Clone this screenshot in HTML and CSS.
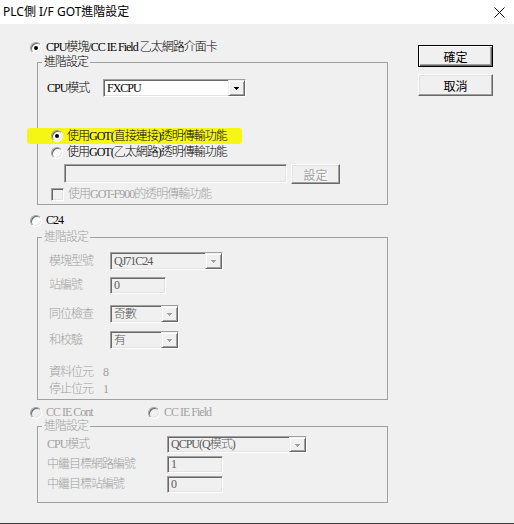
FILE: index.html
```html
<!DOCTYPE html>
<html>
<head>
<meta charset="utf-8">
<title>PLC側 I/F GOT進階設定</title>
<link rel="stylesheet" href="styles.css">
</head>
<body>
<div class="window">
  <div class="titlebar">
    <span class="title">PLC側 I/F GOT進階設定</span>
    <svg class="close" width="11" height="11" viewBox="0 0 11 11"><path d="M0.5 0.5L10.5 10.5M10.5 0.5L0.5 10.5" stroke="#000" stroke-width="1"/></svg>
  </div>
  <div class="content dlg">
    <div class="left">
      <div class="rrow"><span class="radio on"></span><span>CPU模塊/CC IE Field 乙太網路介面卡</span></div>
      <fieldset class="group g1">
        <legend>進階設定</legend>
        <div class="gbody">
          <div class="frow">
            <span class="lbl w56">CPU模式</span>
            <div class="combo h18 w143"><span class="ctext">FXCPU</span><span class="drop"><svg width="5" height="3" viewBox="0 0 5 3" shape-rendering="crispEdges"><path d="M0 0h5v1H0zM1 1h3v1H1zM2 2h1v1H2z" fill="currentColor"/></svg></span></div>
          </div>
          <div class="rrow hl"><span class="radio on"></span><span>使用GOT(直接連接)透明傳輸功能</span></div>
          <div class="rrow sub r2"><span class="radio"></span><span>使用GOT(乙太網路)透明傳輸功能</span></div>
          <div class="trow">
            <div class="edit dis w223"></div>
            <div class="btn small dis">設定</div>
          </div>
          <div class="rrow sub cb dis"><span class="check"></span><span>使用GOT-F900的透明傳輸功能</span></div>
        </div>
      </fieldset>

      <div class="rrow c24"><span class="radio"></span><span>C24</span></div>
      <fieldset class="group g2 dis">
        <legend>進階設定</legend>
        <div class="gbody">
          <div class="frow">
            <span class="lbl w61">模塊型號</span>
            <div class="combo dis h18 w113"><span class="ctext">QJ71C24</span><span class="drop"><svg width="5" height="3" viewBox="0 0 5 3" shape-rendering="crispEdges"><path d="M0 0h5v1H0zM1 1h3v1H1zM2 2h1v1H2z" fill="currentColor"/></svg></span></div>
          </div>
          <div class="frow mt7">
            <span class="lbl w61">站編號</span>
            <div class="edit dis h17 w56"><span class="ctext">0</span></div>
          </div>
          <div class="frow mt11">
            <span class="lbl w61">同位檢查</span>
            <div class="combo dis h18 w69"><span class="ctext">奇數</span><span class="drop"><svg width="5" height="3" viewBox="0 0 5 3" shape-rendering="crispEdges"><path d="M0 0h5v1H0zM1 1h3v1H1zM2 2h1v1H2z" fill="currentColor"/></svg></span></div>
          </div>
          <div class="frow mt8">
            <span class="lbl w61">和校驗</span>
            <div class="combo dis h18 w69"><span class="ctext">有</span><span class="drop"><svg width="5" height="3" viewBox="0 0 5 3" shape-rendering="crispEdges"><path d="M0 0h5v1H0zM1 1h3v1H1zM2 2h1v1H2z" fill="currentColor"/></svg></span></div>
          </div>
          <div class="info mt17"><span class="lbl w54">資料位元</span><span>8</span></div>
          <div class="info mt4"><span class="lbl w54">停止位元</span><span>1</span></div>
        </div>
      </fieldset>

      <div class="ccrow dis">
        <div class="rrow ccitem"><span class="radio"></span><span>CC IE Cont</span></div>
        <div class="rrow"><span class="radio"></span><span>CC IE Field</span></div>
      </div>
      <fieldset class="group g3 dis">
        <legend>進階設定</legend>
        <div class="gbody">
          <div class="frow">
            <span class="lbl w120">CPU模式</span>
            <div class="combo dis h17 w140"><span class="ctext">QCPU(Q模式)</span><span class="drop"><svg width="5" height="3" viewBox="0 0 5 3" shape-rendering="crispEdges"><path d="M0 0h5v1H0zM1 1h3v1H1zM2 2h1v1H2z" fill="currentColor"/></svg></span></div>
          </div>
          <div class="frow mt3">
            <span class="lbl w120">中繼目標網路編號</span>
            <div class="edit dis h17 w56"><span class="ctext">1</span></div>
          </div>
          <div class="frow mt3">
            <span class="lbl w120">中繼目標站編號</span>
            <div class="edit dis h17 w56"><span class="ctext">0</span></div>
          </div>
        </div>
      </fieldset>
    </div>

    <div class="right">
      <div class="btn default">確定</div>
      <div class="btn">取消</div>
    </div>
  </div>
</div>
</body>
</html>
```
FILE: styles.css
```css
* { box-sizing: border-box; }
html, body { margin: 0; padding: 0; }
body { background: #f0f0f0; width: 514px; height: 524px; overflow: hidden; }

.window {
  width: 514px;
  height: 524px;
  display: flex;
  flex-direction: column;
  border-bottom: 1px solid #3a3a3a;
}

.titlebar {
  height: 24px;
  flex: none;
  background: #fff;
  display: flex;
  align-items: center;
  justify-content: space-between;
  padding: 0 9px 1px 3px;
  font: 12px/16px "Noto Sans", "Noto Sans CJK TC", sans-serif;
  color: #000;
}
.close { display: block; margin-top: 1px; }

.dlg {
  font-family: "Liberation Serif", "Noto Sans CJK TC", serif;
  font-size: 12px;
  font-weight: 300;
  line-height: 13px;
  letter-spacing: -1px;
  color: #000;
}

.content { display: flex; flex: 1; align-items: flex-start; }
.left { width: 358px; margin-left: 30px; padding-top: 17px; flex: none; }
.right {
  margin-left: 30px;
  padding-top: 21px;
  display: flex;
  flex-direction: column;
  gap: 7px;
}

/* rows */
.rrow { display: flex; align-items: center; height: 13px; gap: 4px; white-space: nowrap; }
.frow { display: flex; align-items: center; white-space: nowrap; }
.info { display: flex; align-items: center; height: 13px; white-space: nowrap; }
.lbl { flex: none; }

.hl {
  margin-top: 31px;
  margin-left: -20px;
  width: 215px;
  height: 16px;
  padding-left: 24px;
  background: #f6f614;
  border-radius: 3px;
}
.sub { padding-left: 4px; }
.r2 { margin-top: 2px; }
.trow { display: flex; align-items: flex-start; gap: 4px; margin-top: 5px; margin-left: 17px; height: 20px; }
.cb { margin-top: 4px; }
.c24 { margin-top: 9px; }
.ccrow { display: flex; margin-top: 6px; }
.ccitem { width: 118px; }

.mt3 { margin-top: 3px; }
.mt4 { margin-top: 4px; }
.mt7 { margin-top: 7px; }
.mt8 { margin-top: 8px; }
.mt11 { margin-top: 11px; }
.mt17 { margin-top: 17px; }

.w54 { width: 54px; }
.w56 { width: 56px; }
.w61 { width: 61px; }
.w69 { width: 69px; }
.w113 { width: 113px; }
.w120 { width: 120px; }
.w140 { width: 140px; }
.w143 { width: 143px; }
.w223 { width: 223px; }
.h17 { height: 17px; }
.h18 { height: 18px; }

/* group boxes */
.group {
  margin: 0 0 0 7px;
  padding: 0;
  width: 351px;
  min-width: 0;
  border: 1px solid #a0a0a0;
}
.group legend { margin-left: 4px; padding: 0 2px; line-height: 13px; }
.g1 { margin-top: 2px; }
.g1 .gbody { padding: 10px 0 3px 9px; }
.g2 { margin-top: 4px; }
.g2 .gbody { padding: 8px 0 3px 11px; }
.g3 { margin-top: 1px; }
.g3 .gbody { padding: 3px 0 9px 9px; }

.dis { color: #a0a0a0; }

/* radio & checkbox */
.radio {
  flex: none;
  position: relative;
  width: 12px;
  height: 12px;
  border-radius: 50%;
  background: #fff;
  border: 1px solid;
  border-color: #a0a0a0 #fff #fff #a0a0a0;
  box-shadow: inset 1px 1px #696969, inset -1px -1px #e3e3e3;
}
.radio.on::after {
  content: "";
  position: absolute;
  left: 3px;
  top: 3px;
  width: 4px;
  height: 4px;
  border-radius: 50%;
  background: #000;
}
.ccrow .radio { background: #f0f0f0; }

.check {
  flex: none;
  width: 13px;
  height: 13px;
  background: #f0f0f0;
  border: 1px solid;
  border-color: #a0a0a0 #fff #fff #a0a0a0;
  box-shadow: inset 1px 1px #696969, inset -1px -1px #e3e3e3;
}

/* combo & edit */
.combo, .edit {
  display: flex;
  align-items: center;
  flex: none;
  background: #fff;
  border: 1px solid;
  border-color: #a0a0a0 #fff #fff #a0a0a0;
  box-shadow: inset 1px 1px #696969, inset -1px -1px #e3e3e3;
  color: #000;
}
.edit.w223 { height: 19px; }
.combo.dis, .edit.dis { background: #f0f0f0; color: #5a5a5a; }
.ctext { flex: 1; padding-left: 3px; overflow: hidden; }
.drop {
  flex: none;
  width: 17px;
  height: 100%;
  display: flex;
  align-items: center;
  justify-content: center;
  background: #f0f0f0;
  border: 1px solid;
  border-color: #f0f0f0 #696969 #696969 #f0f0f0;
  box-shadow: inset 1px 1px #fff, inset -1px -1px #a0a0a0;
  color: #000;
  padding-top: 1px;
}
.combo.dis .drop { color: #a0a0a0; }
.drop svg { display: block; }

/* buttons */
.btn {
  width: 75px;
  height: 22px;
  display: flex;
  align-items: center;
  justify-content: center;
  background: #f0f0f0;
  border: 1px solid;
  border-color: #fff #696969 #696969 #fff;
  box-shadow: inset -1px -1px #a0a0a0, inset 1px 1px #e3e3e3;
  font-family: "Noto Sans CJK TC", sans-serif;
  font-weight: 400;
  letter-spacing: 0;
  color: #000;
}
.btn.default {
  border-color: #000;
  box-shadow: inset 1px 1px #fff, inset -1px -1px #696969, inset -2px -2px #a0a0a0;
}
.btn.small { width: 49px; height: 20px; }
.btn.dis { color: #a0a0a0; text-shadow: 1px 1px #fff; }
```
